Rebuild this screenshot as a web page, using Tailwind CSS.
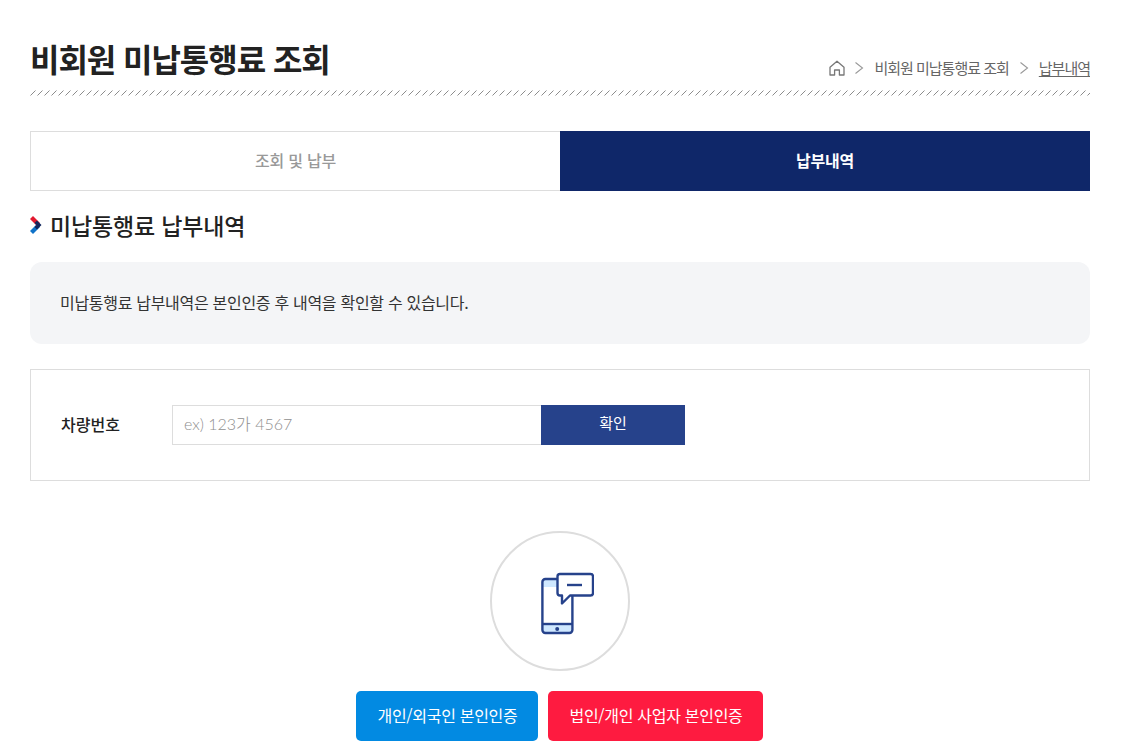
<!DOCTYPE html>
<html lang="ko">
  <head>
    <meta charset="UTF-8" />
    <title>비회원 미납통행료 조회</title>
    <script src="https://cdn.jsdelivr.net/npm/@tailwindcss/browser@4"></script>
  </head>
  <body class="bg-white text-[#222] font-['Noto_Sans_CJK_KR','Noto_Sans',sans-serif]">
    <div class="w-[1060px] ml-[30px] pt-[38px]">
      <!-- 제목 + 경로 -->
      <div class="flex items-end justify-between h-[52px]">
        <h1 class="text-[32px] leading-[42px] font-bold mb-[11px] tracking-[-1.05px]">비회원 미납통행료 조회</h1>
        <div class="flex items-center text-[15px] leading-[20px] text-[#666] tracking-[-1px] mb-[12px]">
          <svg class="w-[18px] h-[18px]" viewBox="0 0 18 18" fill="none" stroke="#777" stroke-width="1.300" stroke-linejoin="round">
            <path d="M2 8.200 9 2.200l7 6V16h-4.600v-5H6.600v5H2z" />
          </svg>
          <svg class="w-[10px] h-[14px] ml-[8px] mr-[10px]" viewBox="0 0 10 14" fill="none" stroke="#999" stroke-width="1.100"><path d="m1.500 1.500 7 5.500-7 5.500" /></svg>
          <span>비회원 미납통행료 조회</span>
          <svg class="w-[10px] h-[14px] ml-[10px] mr-[10px]" viewBox="0 0 10 14" fill="none" stroke="#999" stroke-width="1.100"><path d="m1.500 1.500 7 5.500-7 5.500" /></svg>
          <span class="underline underline-offset-2">납부내역</span>
        </div>
      </div>
      <!-- 빗금 줄 -->
      <svg class="block w-[1060px] h-[6px]" width="1060" height="6">
        <defs>
          <pattern id="hatch" width="7" height="6" patternUnits="userSpaceOnUse">
            <path d="M0.500 5.500 5.500 0.500" stroke="#8c8c8c" stroke-width="1" fill="none" />
          </pattern>
        </defs>
        <rect width="1060" height="6" fill="url(#hatch)" />
      </svg>

      <!-- 탭 -->
      <div class="flex h-[60px] mt-[35px] text-[16px] font-medium tracking-[-0.2px]">
        <div class="w-1/2 flex items-center justify-center pb-[2px] border border-[#ddd] border-r-0 text-[#999]">조회 및 납부</div>
        <div class="w-1/2 flex items-center justify-center pb-[2px] bg-[#0f2769] text-white font-bold">납부내역</div>
      </div>

      <!-- 소제목 -->
      <div class="flex items-center mt-[18px] h-[32px]">
        <svg class="w-[12px] h-[18px] mr-[8px]" viewBox="0 0 12 18">
          <polygon points="0,3 3,0 10,7 7,10" fill="#e2192f" />
          <polygon points="0,15 3,18 10,11 7,8" fill="#0f72c8" />
          <polygon points="7,4.500 11.500,9 7,13.500 4.500,11 6.500,9 4.500,7" fill="#14285f" />
        </svg>
        <h2 class="text-[23px] leading-[32px] font-medium tracking-[-0.15px]">미납통행료 납부내역</h2>
      </div>

      <!-- 안내 -->
      <div class="flex items-center h-[82px] mt-[21px] px-[30px] pb-[3px] bg-[#f4f5f7] rounded-[12px] text-[16px] text-[#333] tracking-[-0.3px]">
        미납통행료 납부내역은 본인인증 후 내역을 확인할 수 있습니다.
      </div>

      <!-- 차량번호 -->
      <div class="flex items-center h-[112px] mt-[25px] px-[30px] border border-[#ddd]">
        <label class="w-[111px] pb-[2px] text-[16px] font-medium">차량번호</label>
        <input class="w-[369px] h-[40px] pl-[11px] pr-[10px] pb-[3px] border border-[#ddd] border-r-0 text-[16px] font-['Lato','Noto_Sans_CJK_KR',sans-serif] font-light placeholder:text-[#8f8f8f] outline-none" placeholder="ex) 123가 4567" />
        <button class="w-[144px] h-[40px] pb-[3px] bg-[#26428b] text-white text-[15px]">확인</button>
      </div>

      <!-- 본인인증 -->
      <div class="flex flex-col items-center mt-[50px]">
        <div class="flex items-center justify-center w-[140px] h-[140px] rounded-full border-2 border-[#ddd]">
          <svg class="w-[56px] h-[66px] ml-[11px] mt-[6px]" viewBox="0 0 56 66" fill="none" stroke="#26428b" stroke-width="2.400" stroke-linejoin="round">
            <path d="M5 9h28v7H5zM5 53h28v8H5z" fill="#cfe8ff" stroke="none" />
            <rect x="4.400" y="8" width="30" height="54" rx="3" />
            <path d="M4.400 53h30" />
            <circle cx="19.200" cy="58" r="2" fill="#26428b" stroke="none" />
            <path d="M22 3h30.500a2.500 2.500 0 0 1 2.500 2.500V22a2.500 2.500 0 0 1-2.500 2.500H32l-8 8v-8h-2a2.500 2.500 0 0 1-2.500-2.500V5.500A2.500 2.500 0 0 1 22 3z" fill="#fff" />
            <path d="M29 14h15" />
          </svg>
        </div>
        <div class="flex gap-[10px] mt-[20px] mr-[2px]">
          <button class="w-[182px] h-[50px] pl-[2px] pb-[2px] rounded-[5px] bg-[#028ae2] text-white text-[16px] tracking-[-0.3px]">개인/외국인 본인인증</button>
          <button class="w-[215px] h-[50px] pl-[2px] pb-[2px] rounded-[5px] bg-[#fe1b40] text-white text-[16px] tracking-[-0.3px]">법인/개인 사업자 본인인증</button>
        </div>
      </div>
    </div>
  </body>
</html>
